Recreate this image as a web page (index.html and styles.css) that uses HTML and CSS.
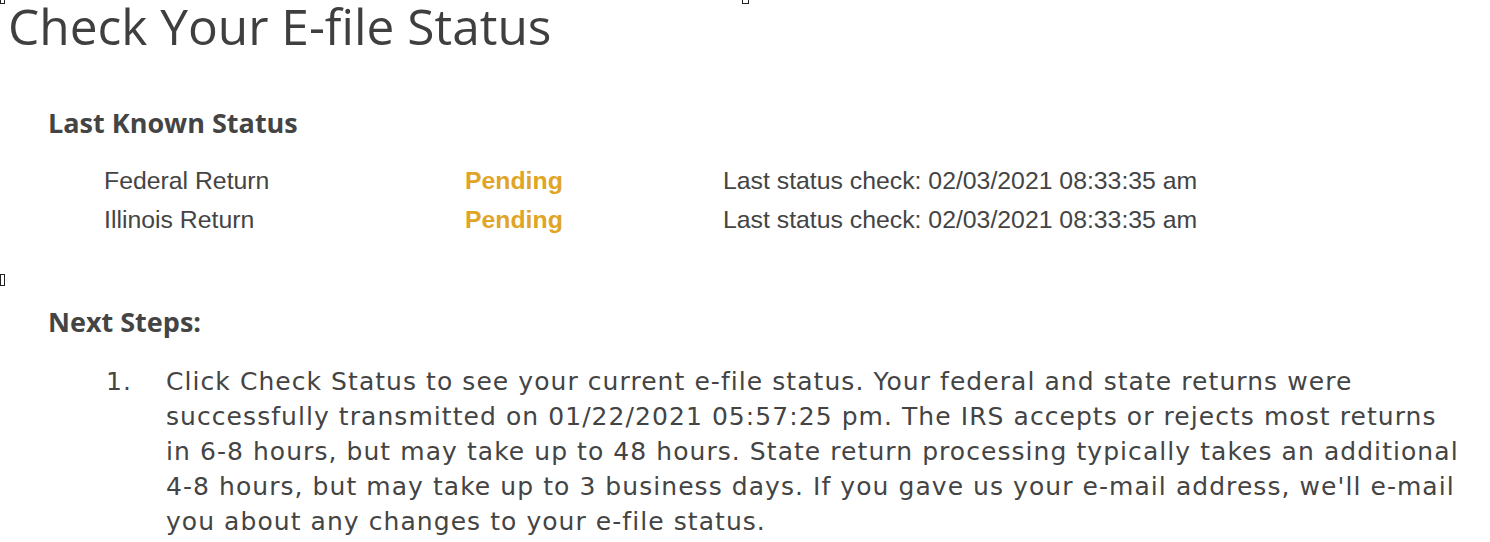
FILE: index.html
```html
<!DOCTYPE html>
<html>
<head>
<meta charset="utf-8">
<link rel="stylesheet" href="styles.css">
</head>
<body>
<span class="marker marker-tl"></span>
<span class="marker marker-top"></span>
<div class="page">
  <h1 class="title">Check Your E-file Status</h1>
  <section class="status">
    <h2 class="heading">Last Known Status</h2>
    <div class="status-grid">
      <div class="cell name">Federal Return</div>
      <div class="cell state">Pending</div>
      <div class="cell check">Last status check: 02/03/2021 08:33:35 am</div>
      <div class="cell name">Illinois Return</div>
      <div class="cell state">Pending</div>
      <div class="cell check">Last status check: 02/03/2021 08:33:35 am</div>
    </div>
  </section>
  <div class="spacer"><span class="marker-inline"></span></div>
  <section class="steps">
    <h2 class="heading">Next Steps:</h2>
    <ol class="step-list">
      <li class="step"><span class="num">1.</span><span class="step-text">Click Check Status to see your current e-file status. Your federal and state returns were successfully transmitted on 01/22/2021 05:57:25 pm. The IRS accepts or rejects most returns in 6-8 hours, but may take up to 48 hours. State return processing typically takes an additional 4-8 hours, but may take up to 3 business days. If you gave us your e-mail address, we'll e-mail you about any changes to your e-file status.</span></li>
    </ol>
  </section>
</div>
</body>
</html>
```
FILE: styles.css
```css
html, body {
  margin: 0;
  padding: 0;
  background: #ffffff;
}
body {
  position: relative;
  color: #444444;
  font-family: "Open Sans", sans-serif;
}
.marker {
  position: absolute;
  border: 1px solid #222;
  background: #fff;
  box-sizing: border-box;
}
.marker-tl {
  left: 0;
  top: -2px;
  width: 5px;
  height: 6px;
}
.marker-top {
  left: 742px;
  top: -3px;
  width: 7px;
  height: 7px;
}
.page {
  padding: 0 0 0 8px;
}
.title {
  margin: 0;
  font-family: "Open Sans", sans-serif;
  font-weight: 400;
  font-size: 49.6px;
  line-height: 52px;
  color: #3f3f3f;
}
.heading {
  margin: 0;
  font-family: "Open Sans", sans-serif;
  font-weight: 700;
  font-size: 27px;
  line-height: 32px;
  color: #444444;
}
.status {
  padding: 55px 0 0 40px;
}
.status-grid {
  display: grid;
  grid-template-columns: 361px 258px auto;
  padding: 28px 0 0 56px;
  row-gap: 11px;
}
.cell {
  font-family: "Liberation Sans", Arial, sans-serif;
  font-size: 24.8px;
  line-height: 28px;
  color: #444444;
}
.state {
  font-weight: 700;
  color: #e0a526;
}
.spacer {
  height: 72px;
  margin-left: -8px;
  display: flex;
  align-items: center;
}
.marker-inline {
  display: block;
  width: 5px;
  height: 12px;
  border: 1px solid #222;
  box-sizing: border-box;
  margin-top: 20px;
}
.steps {
  padding-left: 40px;
}
.step-list {
  list-style: none;
  margin: 0;
  padding: 26px 0 0 58px;
}
.step {
  display: flex;
  font-family: "DejaVu Sans", Verdana, "Bitstream Vera Sans", sans-serif;
  font-size: 25px;
  letter-spacing: 1.06px;
  line-height: 35px;
  color: #444444;
}
.num {
  flex: 0 0 60px;
}
.step-text {
  max-width: 1302px;
}
```
